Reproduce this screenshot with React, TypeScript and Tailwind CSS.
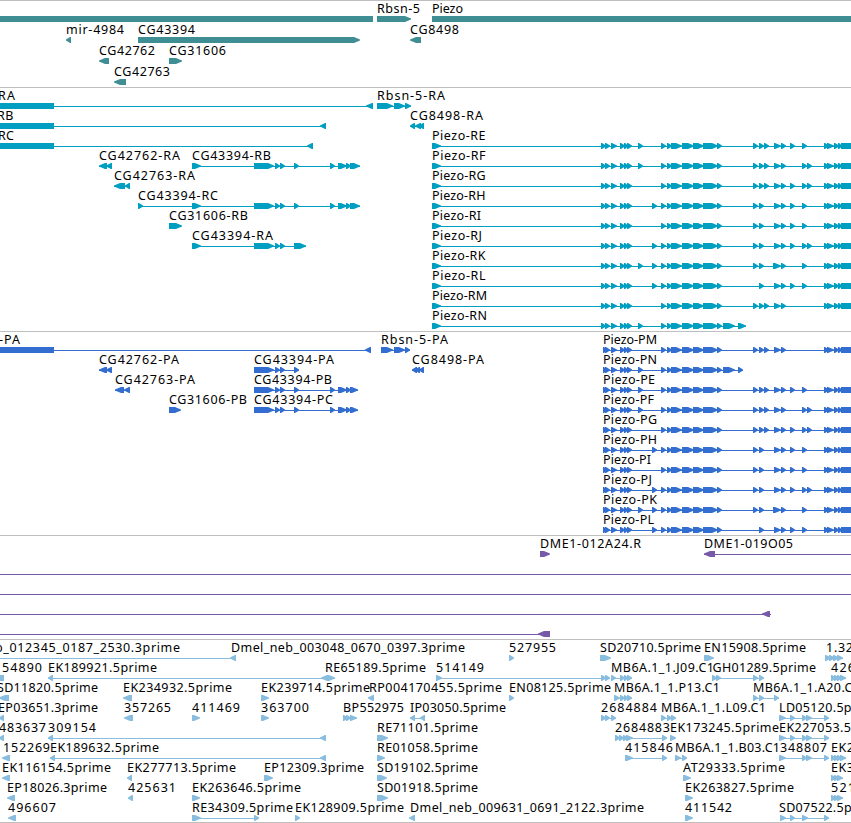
type Dir = 'l' | 'r' | 'b';
type Part = [number, number, Dir?];

interface Feature {
  row: number;
  label?: string;
  from?: number;
  to?: number;
  dir?: Dir;
  parts?: Part[];
  line?: [number, number];
}

interface TrackProps {
  name: string;
  height: number;
  pitch: number;
  colour: string;
  features: Feature[];
}

const W = 851;

const f = (
  row: number,
  label: string,
  from: number,
  to: number,
  dir: Dir = 'r',
  parts: Part[] = [],
  line?: [number, number],
): Feature => ({ row, label, from, to, dir, parts, line });

/* One exon: a box that narrows to a point on its downstream side. */
function exonPoints(a: number, b: number, dir: Dir, y: number) {
  if (dir === 'b') return `${a},${y} ${b},${y} ${b},${y + 6} ${a},${y + 6}`;
  const w = b - a;
  const head = w <= 6 ? w - 1 : 6;
  const tip = y + 3;
  if (dir === 'r') {
    return `${a},${y} ${b - head},${y} ${b},${tip - 0.6} ${b},${tip + 0.6} ${b - head},${y + 6} ${a},${y + 6}`;
  }
  return `${b},${y} ${a + head},${y} ${a},${tip - 0.6} ${a},${tip + 0.6} ${a + head},${y + 6} ${b},${y + 6}`;
}

function Track({ name, height, pitch, colour, features }: TrackProps) {
  return (
    <section aria-label={name} className={`border-t border-[#bfbfbf] ${colour}`}>
      <svg width={W} height={height - 1} className="block overflow-hidden" fill="currentColor">
        {features.map((ft, i) => {
          const top = ft.row * pitch;
          const parts = ft.parts ?? [];
          const span: [number, number] | undefined =
            ft.line ?? (parts.length > 1 ? [parts[0][0], parts[parts.length - 1][1]] : undefined);
          return (
            <g key={i}>
              {span && <rect x={span[0]} y={top + 18} width={span[1] - span[0]} height={1} />}
              {parts.map(([a, b, d], j) => (
                <polygon key={j} points={exonPoints(a, b, d ?? ft.dir ?? 'r', top + 15)} />
              ))}
            </g>
          );
        })}
        {features.map((ft, i) =>
          ft.label ? (
            <text
              key={i}
              x={ft.from}
              y={ft.row * pitch + 12}
              textLength={(ft.to ?? 0) - (ft.from ?? 0)}
              className="fill-black font-['Noto_Sans','Open_Sans',sans-serif] text-[12.5px]"
            >
              {ft.label}
            </text>
          ) : null,
        )}
      </svg>
    </section>
  );
}

const genes: Feature[] = [
  { row: 0, parts: [[0, 373, 'b']] },
  f(0, 'Rbsn-5', 377, 420, 'r', [[377, 411]]),
  f(0, 'Piezo', 432, 463, 'b', [[432, 851]]),
  f(1, 'mir-4984', 66, 124, 'l', [[66, 71]]),
  f(1, 'CG43394', 138, 195, 'r', [[138, 360]]),
  f(1, 'CG8498', 410, 459, 'l', [[410, 421]]),
  f(2, 'CG42762', 99, 155, 'l', [[99, 109]]),
  f(2, 'CG31606', 169, 226, 'r', [[169, 182]]),
  f(3, 'CG42763', 114, 170, 'l', [[114, 126]]),
];

/* Exons that every Piezo isoform shares, and the ones that are spliced in or out. */
const triple: Part[] = [[611, 617], [620, 625], [624, 628], [627, 632]];
const core: Part[] = [[661, 666], [667, 672], [671, 682], [682, 694], [693, 704], [703, 718], [717, 722]];
const tail: Part[] = [[824, 829], [827, 834], [834, 839], [838, 842], [841, 851, 'b']];
const optional: Record<string, Part> = {
  P: [638, 643],
  Q: [652, 657],
  a: [753, 758],
  b: [759, 764],
  c: [764, 769],
  D: [774, 781],
  K: [773, 781],
  d: [781, 786],
  E: [790, 795],
  F: [802, 807],
  G: [807, 812],
};
const splices: Record<string, string> = {
  E: 'PabcDdEF',
  F: 'PabcDdFG',
  G: 'abcDdEFG',
  H: 'QabDdEF',
  I: 'abDdEF',
  J: 'QabDdEFG',
  K: 'PQabKdF',
  L: 'QbDdEF',
  M: 'abcDd',
};

function piezo(iso: string, start: Part[], short: Part): Part[] {
  if (iso === 'N') return [...start, ...triple, optional.P, ...core, [723, 735], short];
  const picked = [...splices[iso]].map((k) => optional[k]);
  return [...start, ...triple, ...core, ...picked, ...tail];
}

const cgMid: Part[] = [[254, 274], [275, 280], [280, 285]];
const cgEnd: Part[] = [[294, 299], [330, 335], [338, 347], [346, 351], [350, 360]];
const cgEndP: Part[] = [[294, 299], [330, 335], [338, 347], [346, 351], [350, 358]];

const transcripts: Feature[] = [
  f(0, 'RA', -2, 15, 'l', [[0, 54, 'b'], [366, 373]]),
  f(0, 'Rbsn-5-RA', 377, 445, 'r', [[377, 393], [394, 405], [405, 411]]),
  f(1, 'RB', -3, 13.5, 'l', [[0, 54, 'b'], [320, 326]]),
  f(1, 'CG8498-RA', 410, 483, 'l', [[410, 415], [415, 421], [419, 424]]),
  f(2, 'RC', -2, 14, 'l', [[0, 54, 'b'], [307, 313]]),
  f(3, 'CG42762-RA', 99, 180, 'l', [[99, 107], [106, 112]]),
  f(3, 'CG43394-RB', 192, 271, 'r', [[192, 201], ...cgMid, ...cgEnd]),
  f(4, 'CG42763-RA', 114, 195, 'l', [[114, 125], [125, 130]]),
  f(5, 'CG43394-RC', 138, 218, 'r', [[138, 143], [192, 201], ...cgMid, ...cgEnd]),
  f(6, 'CG31606-RB', 169, 248, 'r', [[169, 182]]),
  f(7, 'CG43394-RA', 192, 273, 'r', [[192, 201], ...cgMid, [294, 306]]),
  ...[...'EFGHIJKLMN'].map((iso, i) =>
    f(i + 2, `Piezo-R${iso}`, 432, iso === 'I' ? 481 : iso === 'J' ? 482 : iso === 'M' || iso === 'N' ? 487 : 485.5, 'r',
      piezo(iso, [[432, 441], [601, 606], [605, 610]], [738, 746])),
  ),
];

const proteins: Feature[] = [
  f(0, '-PA', -1, 20, 'l', [[0, 54, 'b'], [365, 371]]),
  f(0, 'Rbsn-5-PA', 381, 448, 'r', [[381, 393], [394, 405], [405, 410]]),
  f(1, 'CG42762-PA', 99, 179, 'l', [[99, 107], [106, 112]]),
  f(1, 'CG43394-PA', 254, 334, 'r', [...cgMid, [294, 299]]),
  f(1, 'CG8498-PA', 412, 484, 'l', [[412, 417], [415, 420], [419, 424]]),
  f(2, 'CG42763-PA', 115, 195, 'l', [[115, 124], [124, 130]]),
  f(2, 'CG43394-PB', 254, 332, 'r', [...cgMid, ...cgEndP]),
  f(3, 'CG31606-PB', 169, 247, 'r', [[169, 181]]),
  f(3, 'CG43394-PC', 254, 333, 'r', [...cgMid, ...cgEndP]),
  ...[...'MNEFGHIJKL'].map((iso, i) =>
    f(i, `Piezo-P${iso}`, 603, iso === 'I' ? 651 : iso === 'J' ? 652 : iso === 'F' || iso === 'L' ? 654 : iso === 'E' ? 655 : 657, 'r',
      piezo(iso, [[603, 607], [605, 610]], [738, 743])),
  ),
];

const clones: Feature[] = [
  f(0, 'DME1-012A24.R', 540, 641, 'r', [[540, 550]]),
  f(0, 'DME1-019O05', 704, 793, 'l', [[704, 715]], [704, 851]),
  { row: 1, line: [0, 851] },
  { row: 2, line: [0, 851] },
  { row: 3, dir: 'l', parts: [[762, 770]], line: [0, 771] },
  { row: 4, dir: 'l', parts: [[538, 550]], line: [0, 549] },
];

const quad: Part[] = [[620, 625], [624, 628], [627, 632]];
const ldParts: Part[] = [[779, 786], [790, 795], [802, 807], [806, 812], [824, 829]];
const edge: Part[] = [[831, 836], [834, 839], [837, 843]];
const edgeLong: Part[] = [[831, 836], [834, 839], [837, 842], [840, 846]];

const ests: Feature[] = [
  f(0, 'b_012345_0187_2530.3prime', -5, 180, 'l', [[230, 236]], [0, 236]),
  f(0, 'Dmel_neb_003048_0670_0397.3prime', 231, 465),
  f(0, '527955', 509, 556, 'r', [[509, 514]]),
  f(0, 'SD20710.5prime', 600, 701, 'r', [[600, 611]]),
  f(0, 'EN15908.5prime', 704, 806, 'r', [[704, 714]]),
  f(0, '1.32', 826, 853, 'r', [[825, 831], [829, 835], [833, 839], [837, 843]]),
  f(1, '54890', 2, 42, 'b', [[0, 4]]),
  f(1, 'EK189921.5prime', 48, 157, 'l', [[48, 53]], [48, 330]),
  f(1, 'RE65189.5prime', 325, 426, 'r', [[321, 329, 'l'], [328, 335]]),
  f(1, '514149', 436, 484, 'r', [[436, 442], [601, 606], [605, 610]]),
  f(1, 'MB6A.1_1.J09.C1', 611, 714, 'r', [[611, 616], ...quad]),
  f(1, 'GH01289.5prime', 712.5, 816, 'r', [[712, 717], [716, 721], [753, 758], [759, 764]]),
  f(1, '426', 831, 855, 'r', edgeLong),
  f(2, 'SD11820.5prime', -3, 98, 'l', [[-1, 9]]),
  f(2, 'EK234932.5prime', 123, 232, 'l', [[123, 132]]),
  f(2, 'EK239714.5prime', 261, 370, 'r', [[261, 269]]),
  f(2, 'RP004170455.5prime', 369, 502, 'l', [[368, 374]]),
  f(2, 'EN08125.5prime', 509, 611, 'r', [[509, 514]]),
  f(2, 'MB6A.1_1.P13.C1', 614, 720, 'r', [[614, 620], ...quad]),
  f(2, 'MB6A.1_1.A20.C1', 753, 860, 'r', [[753, 758], [759, 764], [774, 779]]),
  f(3, 'EP03651.3prime', -2, 98, 'l', [[-1, 4]]),
  f(3, '357265', 124, 171, 'l', [[124, 133]]),
  f(3, '411469', 192, 240, 'r', [[192, 200]]),
  f(3, '363700', 261, 309, 'r', [[261, 269]]),
  f(3, 'BP552975', 343, 404, 'r', [[343, 348], [346, 351], [350, 357]]),
  f(3, 'IP03050.5prime', 410, 506, 'l', [[410, 415], [420, 425]]),
  f(3, '2684884', 601, 657, 'r', [[601, 606], [605, 610], [611, 616]]),
  f(3, 'MB6A.1_1.L09.C1', 661, 766, 'r', [[661, 666], [667, 672], [671, 676]]),
  f(3, 'LD05120.5prime', 779, 880, 'r', ldParts),
  f(4, '483637', -1, 46, 'l', [[-1, 4]]),
  f(4, '309154', 48, 96, 'l', [[48, 53], [320, 326]]),
  f(4, 'RE71101.5prime', 377, 478, 'r', [[377, 388]]),
  f(4, '2684883', 615, 670, 'r', [[615, 620], [619, 624], [623, 628], [626, 633], [662, 667]]),
  f(4, 'EK173245.5prime', 670, 779, 'r', [[670, 676]]),
  f(4, 'EK227053.5prime', 779, 888, 'r', ldParts),
  f(5, '152269', 3, 50, 'l', [[2, 10]]),
  f(5, 'EK189632.5prime', 50, 159, 'l', [[50, 55], [320, 326]]),
  f(5, 'RE01058.5prime', 377, 478, 'r', [[377, 385]]),
  f(5, '415846', 625, 673, 'r', [[625, 633], [662, 667]]),
  f(5, 'MB6A.1_1.B03.C1', 675, 780, 'r', [[675, 681], [682, 687]]),
  f(5, '348807', 780, 827, 'r', [[779, 786], [802, 807], [806, 812], [824, 829]]),
  f(5, 'EK2', 831, 854, 'r', edgeLong),
  f(6, 'EK116154.5prime', 2, 111, 'l', [[2, 10]]),
  f(6, 'EK277713.5prime', 127, 236, 'l', [[127, 132]]),
  f(6, 'EP12309.3prime', 264, 364, 'r', [[264, 273]]),
  f(6, 'SD19102.5prime', 377, 478, 'r', [[377, 387]]),
  f(6, 'AT29333.5prime', 683, 785, 'r', [[683, 691]]),
  f(6, 'EK3', 831, 854, 'r', edge),
  f(7, 'EP18026.3prime', 7, 107, 'l', [[7, 15]]),
  f(7, '425631', 128, 176, 'l', [[128, 133]]),
  f(7, 'EK263646.5prime', 192, 301, 'r', [[192, 200]]),
  f(7, 'SD01918.5prime', 377, 478, 'r', [[377, 388]]),
  f(7, 'EK263827.5prime', 685, 794, 'r', [[685, 693]]),
  f(7, '521', 831, 855, 'r', edge),
  f(8, '496607', 8, 56, 'l', [[8, 16]]),
  f(8, 'RE34309.5prime', 192, 293, 'r', [[192, 201], [254, 259]]),
  f(8, 'EK128909.5prime', 295, 404, 'r', [[295, 300]]),
  f(8, 'Dmel_neb_009631_0691_2122.3prime', 410, 644, 'l', [[409, 415]]),
  f(8, '411542', 685, 732, 'r', [[685, 693]]),
  f(8, 'SD07522.5prime', 779, 880, 'r', [[780, 786], [790, 795], [802, 808], [824, 829]]),
];

export default function App() {
  return (
    <main className="flex h-[823px] w-[851px] flex-col overflow-hidden border-b border-[#bfbfbf] bg-white">
      <Track name="Genes" height={87} pitch={21} colour="text-[#3f8e94]" features={genes} />
      <Track name="Transcripts" height={244} pitch={20} colour="text-[#009fc1]" features={transcripts} />
      <Track name="Proteins" height={204} pitch={20} colour="text-[#326dcf]" features={proteins} />
      <Track name="Clones" height={104} pitch={20} colour="text-[#7659a9]" features={clones} />
      <Track name="ESTs" height={183} pitch={20} colour="text-[#88bddf]" features={ests} />
    </main>
  );
}
